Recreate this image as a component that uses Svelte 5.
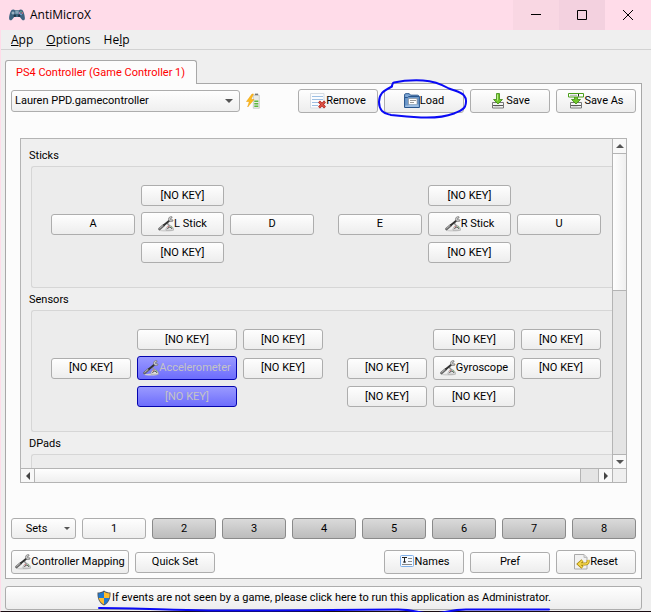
<script>
  const profiles = ['Lauren PPD.gamecontroller', '[NO PROFILE]'];
  let profile = $state(profiles[0]);
  let activeSet = $state(1);
  const sets = [1, 2, 3, 4, 5, 6, 7, 8];
  const none = '[NO KEY]';

  // Each pad is a 3x3 grid, read row by row; null leaves the cell empty.
  const groups = [
    {
      title: 'Sticks',
      pads: [
        { kind: 'stick', cells: [null, none, null, 'A', { name: 'L Stick' }, 'D', null, none, null] },
        { kind: 'stick', cells: [null, none, null, 'E', { name: 'R Stick' }, 'U', null, none, null] }
      ]
    },
    {
      title: 'Sensors',
      pads: [
        { kind: 'accel', active: true, cells: [null, none, none, none, { name: 'Accelerometer' }, none, null, none, null] },
        { kind: 'gyro', cells: [null, none, none, none, { name: 'Gyroscope' }, none, none, none, null] }
      ]
    },
    { title: 'DPads', pads: [] }
  ];
</script>

{#snippet tools()}
  <svg class="icon" viewBox="0 0 16 16" aria-hidden="true">
    <ellipse cx="8" cy="14.600" rx="7" ry="1" fill="#d0d0d0" />
    <path d="M8 14.200c-.5-6 7.500-6 7.500 0z" fill="#e4e4e4" stroke="#999" stroke-width=".6" />
    <path d="M9.500 13a2.300 2.300 0 0 1 4.500 0" fill="none" stroke="#555" />
    <path d="M9.500 11l1.400-.9" stroke="#d66" />
    <path d="M12.800 10.300l1.400 1.200" stroke="#6a6" />
    <path d="M9 7l3 3.500" stroke="#999" stroke-width="1.600" />
    <path d="M1.500 13L5.500 9.500" stroke="#666" stroke-width="2.600" stroke-linecap="round" />
    <path d="M1.500 12.500L5.300 9.200" stroke="#ccc" stroke-width=".8" />
    <path d="M5.500 9.500L11.500 4.500" stroke="#333" stroke-width="2" />
    <path d="M14 .8c-2-.6-3.800.8-3.400 2.800.3 1.700 2.200 2.600 4.400 1.400l-.3-1.200-1.900.1-.5-1.300 1.700-.7z" fill="#d0d0d0" stroke="#777" stroke-width=".8" />
  </svg>
{/snippet}

<div class="window">
  <header class="titlebar">
    <svg class="pad-logo" viewBox="0 0 16 12" aria-hidden="true">
      <path d="M3 .8Q5 0 6 1.300h4Q11 0 13 .8c1.500 1 2.700 5 2.900 8.200.1 2.600-1.900 3-3.100 1.400L10.800 8H5.200l-2 2.400C2 12 0 11.600.1 9 .3 5.800 1.500 1.800 3 .8z" fill="#3d6480" />
      <path d="M6.300 1.800h3.400v3H6.300z" fill="#87a5b8" />
      <path d="M2.500 4h3M4 2.500v3" stroke="#b8cad5" />
      <circle cx="5.800" cy="6.800" r="1.200" fill="#1d3445" />
      <circle cx="10.200" cy="6.800" r="1.200" fill="#1d3445" />
      <circle cx="12" cy="2.800" r=".8" fill="#62b58c" />
      <circle cx="13.300" cy="4.100" r=".8" fill="#e07575" />
      <circle cx="10.700" cy="4.100" r=".8" fill="#d78ec4" />
      <circle cx="12" cy="5.400" r=".8" fill="#76a8e0" />
    </svg>
    <span class="title">AntiMicroX</span>
    <button class="caption min" aria-label="Minimize"><svg viewBox="0 0 10 10"><path d="M0 4.500h10" /></svg></button>
    <button class="caption max" aria-label="Maximize"><svg viewBox="0 0 10 10"><path d="M.5.5h9v9h-9z" /></svg></button>
    <button class="caption" aria-label="Close"><svg viewBox="0 0 10 10"><path d="M0 0l10 10M10 0L0 10" /></svg></button>
  </header>

  <nav class="menubar">
    <button><u>A</u>pp</button>
    <button><u>O</u>ptions</button>
    <button>He<u>l</u>p</button>
  </nav>

  <main>
    <div class="tabs" role="tablist">
      <button class="tab" role="tab" aria-selected="true">PS4 Controller (Game Controller 1)</button>
    </div>

    <section class="pane">
      <div class="row profile">
        <div class="combo">
          <select bind:value={profile} aria-label="Profile">
            {#each profiles as p}<option>{p}</option>{/each}
          </select>
          <i class="arrow down"></i>
        </div>
        <svg class="battery" viewBox="0 0 16 16" role="img" aria-label="Charging">
          <path d="M9 .8h3v1.500h1.300v13H7.300v-13H9z" fill="#e8ebe8" stroke="#b4bab4" stroke-width=".6" />
          <path d="M9 .8h3v1.500H9z" fill="#777" />
          <path d="M8.300 7.500h4v1.500h-4zM8.300 10h4v1.500h-4zM8.300 12.500h4V14h-4z" fill="#5cb83c" />
          <path d="M6 1L.5 8.500h2.800L1.700 14 8 6.500H5L7.500 1z" fill="#fdbb1c" stroke="#e79a0c" stroke-width=".5" />
        </svg>
        <span class="grow"></span>
        <button class="btn std">
          <svg class="icon" viewBox="0 0 16 16" aria-hidden="true">
            <path d="M.5.5h13.500v14.500H.5z" fill="#fbfcfe" stroke="#d5dbe2" />
            <path d="M2 3.500h11M2 6.500h11M2 9.500h7M2 12.500h6" stroke="#9dbfe3" />
            <path d="M9 8.500l6 6M15 8.500l-6 6" stroke="#b3261c" stroke-width="2.600" />
            <path d="M9.400 8.900l5.200 5.200M14.600 8.900l-5.200 5.200" stroke="#e4584c" stroke-width="1.200" />
          </svg>Remove
        </button>
        <div class="circled">
          <button class="btn std">
            <svg class="icon" viewBox="0 0 16 16" aria-hidden="true">
              <path d="M.6 14V1.800Q.6.700 1.700.7h3.600l1.200 1.500h7.200q1 0 1 1v2" fill="#7fa8d6" stroke="#29558c" />
              <path d="M.6 14.500V4.500h3l1-1h10.800v11z" fill="#6d99cb" stroke="#29558c" />
              <path d="M4.500 5.500h8.500v6H4.500z" fill="#fff" stroke="#8a8a8a" stroke-width=".6" />
              <path d="M6 7.500h6M6 9.500h4" stroke="#999" />
              <path d="M1.200 12.500h3l1.300-1h9.200V14H1.200z" fill="#9dbfe4" />
            </svg>Load
          </button>
          <svg class="ink loop" viewBox="0 0 94 42" aria-hidden="true">
            <path d="M15 7.500C12 9 8 11 5 14c-4 5-4 13 0 18 3 3 6 3 9 4 9 1 20 2 30 2.500 12 .5 25-1 33-4 4-2 9-3 11-7 1.500-4 1.500-8-1-11-3-4-11-5-15-7C64 5 56 2 46 1.500 35 1 24 2 17 3.500c-2 .5-1 2-2.500 4" />
          </svg>
        </div>
        <button class="btn std">
          <svg class="icon" viewBox="0 0 16 16" aria-hidden="true">
            <path d="M2.500 9.500h11v5.500h-11z" fill="#f4f4f4" stroke="#777" />
            <path d="M3 12.500h10" stroke="#555" /><path d="M4.500 14h5" stroke="#bbb" />
            <path d="M6.500.5h3v6h3L8 11 3.500 6.500h3z" fill="#72c62c" stroke="#3d8a12" stroke-width=".8" />
            <path d="M7.500 1.500v6" stroke="#b9ee84" />
          </svg>Save
        </button>
        <button class="btn std">
          <svg class="icon" viewBox="0 0 16 16" aria-hidden="true">
            <path d="M2.500 9.500h11v5.500h-11z" fill="#f4f4f4" stroke="#777" />
            <path d="M3 12.500h10" stroke="#555" /><path d="M4.500 14h5" stroke="#bbb" />
            <path d="M6.500 3h3v3.500h3L8 11 3.500 6.500h3z" fill="#72c62c" stroke="#3d8a12" stroke-width=".8" />
            <path d="M.5.5h15v3.500H.5z" fill="#fff" stroke="#4ba01b" />
            <path d="M2 2.300h7" stroke="#aaa" /><path d="M10.500 1v2.500" stroke="#222" />
          </svg>Save As
        </button>
      </div>

      <div class="scrollarea">
        <div class="viewport">
          {#each groups as group}
            <h2>{group.title}</h2>
            <div class="group">
              {#each group.pads as pad}
                <div class="pad {pad.kind}">
                  {#each pad.cells as cell, i}
                    {#if cell === null}
                      <span></span>
                    {:else if typeof cell === 'string'}
                      <button class="btn key" class:active={pad.active && i === 7}>{cell}</button>
                    {:else}
                      <button class="btn" class:active={pad.active}>{@render tools()}{cell.name}</button>
                    {/if}
                  {/each}
                </div>
              {/each}
            </div>
          {/each}
        </div>
        <div class="bar vertical">
          <button class="step" aria-label="Scroll up"><i class="arrow up"></i></button>
          <div class="thumb"></div>
          <button class="step last" aria-label="Scroll down"><i class="arrow down"></i></button>
        </div>
        <div class="bar horizontal">
          <button class="step" aria-label="Scroll left"><i class="arrow left"></i></button>
          <div class="thumb"></div>
          <button class="step last" aria-label="Scroll right"><i class="arrow right"></i></button>
        </div>
        <div class="corner"></div>
      </div>

      <div class="row sets">
        <button class="btn key setmenu">Sets<i class="arrow down small"></i></button>
        {#each sets as n}
          <button class="btn key set" class:dim={n !== activeSet} onclick={() => (activeSet = n)}>{n}</button>
        {/each}
      </div>

      <div class="row">
        <button class="btn mapping">{@render tools()}Controller Mapping</button>
        <button class="btn key std">Quick Set</button>
        <span class="grow"></span>
        <button class="btn std">
          <svg class="icon" viewBox="0 0 16 16" aria-hidden="true">
            <rect x="1.500" y="1.500" width="13" height="11" rx="1" fill="#f4f9ff" stroke="#7fb0ea" />
            <path d="M3 3.500h5M5.500 3v5.500M4 8h3" stroke="#222" />
            <path d="M9 4.500h4M9 7.500h4M3 10.500h10" stroke="#888" />
          </svg>Names
        </button>
        <button class="btn key std">Pref</button>
        <button class="btn std">
          <svg class="icon" viewBox="0 0 16 16" aria-hidden="true">
            <path d="M.5.5h9.500L13 3.500V15H.5z" fill="#f1f1f1" stroke="#aaa" />
            <path d="M10 .5v3h3" fill="#ddd" stroke="#bbb" />
            <path d="M8.500 6.500L4.500 10l4 3.500M5 10h6c3 0 3.500-2 3-4" fill="none" stroke="#a8860c" stroke-width="3" />
            <path d="M8.500 6.500L4.500 10l4 3.500M5 10h6c3 0 3.500-2 3-4" fill="none" stroke="#f5d84c" stroke-width="1.500" />
          </svg>Reset
        </button>
      </div>
    </section>

    <div class="admin">
      <button class="btn">
        <svg class="icon" viewBox="0 0 16 16" aria-hidden="true">
          <path d="M8 .5c2 1.500 4 2 6.500 2 .3 6-1.500 10.500-6.500 13C3 13 1.200 8.500 1.500 2.500 4 2.500 6 2 8 .5z" fill="#505860" />
          <path d="M8 1.800V8H2.700C2.400 6.500 2.400 5 2.400 3.400 4.500 3.400 6.400 3 8 1.800z" fill="#1f78d0" />
          <path d="M8 1.800V8h5.300c.3-1.500.3-3 .3-4.600C11.500 3.400 9.600 3 8 1.800z" fill="#fdbc2c" />
          <path d="M8 8v6.500C5.200 13 3.400 10.700 2.700 8z" fill="#fdbc2c" />
          <path d="M8 8v6.500c2.800-1.500 4.600-3.800 5.300-6.500z" fill="#1f78d0" />
        </svg>If events are not seen by a game, please click here to run this application as Administrator.
      </button>
      <svg class="ink underline" viewBox="0 0 456 10" aria-hidden="true">
        <path d="M1 3C40 3 70 5 110 5.500 180 6 250 4.500 300 4.500c18 0 20 4 34 4 12 0 18-4 34-4h83" />
      </svg>
    </div>
  </main>
</div>

<style>
  :global(body) {
    margin: 0;
    background: #fff;
  }

  .window {
    border-left: 1px solid #ffdce9;
    border-bottom: 1px solid #1a0d12;
    background: #efefef;
    color: #000;
    font: 11px/16px Roboto, sans-serif;
  }

  button,
  select {
    font: inherit;
    color: inherit;
    margin: 0;
    padding: 0;
    border: 0;
    background: none;
    border-radius: 0;
    box-sizing: border-box;
  }

  .titlebar {
    display: flex;
    align-items: center;
    height: 30px;
    padding-left: 8px;
    background: #ffdce9;
    font: 12px/16px 'Open Sans', sans-serif;
  }
  .pad-logo {
    width: 16px;
    height: 12px;
    margin-right: 5px;
  }
  .title {
    flex: 1;
  }
  .caption {
    width: 46px;
    height: 30px;
    display: flex;
    align-items: center;
    justify-content: center;
  }
  .caption svg {
    width: 10px;
    height: 10px;
    fill: none;
    stroke: #000;
  }
  .min {
    background: #f9d7e3;
  }
  .max {
    background: #f3d1df;
  }

  .menubar {
    display: flex;
    gap: 13px;
    height: 19px;
    padding-left: 10px;
    border-bottom: 1px solid #d2d2d2;
    font: 12px/18px 'Open Sans', sans-serif;
  }

  main {
    padding: 10px 9px 1px 4px;
  }

  .tabs {
    display: flex;
  }
  .tab {
    position: relative;
    z-index: 1;
    height: 24px;
    margin-bottom: -1px;
    padding: 0 11px 0 10px;
    border: 1px solid #a8a8a8;
    border-bottom: 0;
    border-radius: 3px 3px 0 0;
    background: #fcfcfc;
    color: #f00;
  }

  .pane {
    padding: 5px 5px 4px;
    border: 1px solid #a8a8a8;
    background: #fcfcfc;
  }

  .row {
    display: flex;
    align-items: center;
    gap: 6px;
  }
  .grow {
    flex: 1;
  }

  .btn {
    display: flex;
    align-items: center;
    justify-content: center;
    height: 24px;
    border: 1px solid #adadad;
    border-radius: 3px;
    background: linear-gradient(#fefefe, #ededed);
    white-space: nowrap;
  }
  .key {
    height: 21px;
  }
  .std {
    width: 80px;
  }
  .icon {
    width: 16px;
    height: 16px;
    flex: none;
  }
  .active {
    border-color: #0404ae;
    background: linear-gradient(#9a9aff, #6d6dfc);
    color: #c4c4c4;
  }
  .dim {
    border-color: #8a8a8a;
    background: linear-gradient(#dadada, #bcbcbc);
  }

  .combo {
    position: relative;
    width: 229px;
  }
  .combo select {
    display: block;
    appearance: none;
    width: 100%;
    height: 22px;
    padding: 0 20px 0 3px;
    border: 1px solid #adadad;
    border-radius: 3px;
    background: linear-gradient(#fefefe, #efefef);
  }
  .combo .arrow {
    position: absolute;
    right: 7px;
    top: 9px;
    pointer-events: none;
  }
  .battery {
    width: 16px;
    height: 16px;
  }

  .arrow {
    width: 0;
    height: 0;
    border: 4px solid transparent;
  }
  .down {
    border-top-color: #555;
    border-bottom: 0;
  }
  .up {
    border-bottom-color: #555;
    border-top: 0;
  }
  .left {
    border-right-color: #444;
    border-left: 0;
  }
  .right {
    border-left-color: #444;
    border-right: 0;
  }
  .small {
    border-width: 3px;
    border-bottom: 0;
  }

  .ink {
    position: absolute;
    fill: none;
    stroke: #0a0af5;
    stroke-width: 2;
    stroke-linecap: round;
    pointer-events: none;
  }
  .circled {
    position: relative;
  }
  .loop {
    left: -7px;
    top: -10px;
    width: 94px;
    height: 42px;
  }

  .scrollarea {
    display: grid;
    grid-template-columns: minmax(0, 1fr) 14px;
    grid-template-rows: auto 14px;
    margin: 25px 9px 35px;
    border: 1px solid #b4b4b4;
    background: #efefef;
  }
  .viewport {
    height: 329px;
    box-sizing: border-box;
    padding: 9px 0 0 8px;
    overflow: hidden;
  }
  h2 {
    margin: 0;
    font: inherit;
  }
  .group {
    display: flex;
    gap: 24px;
    box-sizing: border-box;
    min-height: 122px;
    margin: 2px 0 4px 2px;
    padding: 18px 11px 24px 19px;
    border: 1px solid #d6d6d6;
    border-right: 0;
    border-radius: 3px 0 0 3px;
    background: #ececec;
  }
  .pad {
    display: grid;
    gap: 6px;
    align-items: center;
    align-content: start;
  }
  .stick {
    grid-template-columns: 84px 83px 84px;
  }
  .accel {
    grid-template-columns: 80px 100px 80px;
  }
  .gyro {
    grid-template-columns: 80px 82px 80px;
  }

  .bar {
    display: flex;
    background: #e4e4e4;
  }
  .vertical {
    flex-direction: column;
    border-left: 1px solid #b4b4b4;
  }
  .horizontal {
    border-top: 1px solid #b4b4b4;
  }
  .step {
    display: flex;
    flex: none;
    align-items: center;
    justify-content: center;
    width: 13px;
    height: 14px;
    background: #f8f8f8;
  }
  .horizontal .step {
    height: 13px;
  }
  .last {
    margin-top: auto;
    border-top: 1px solid #b4b4b4;
  }
  .horizontal .last {
    width: 14px;
    margin: 0;
    border-top: 0;
    border-left: 1px solid #b4b4b4;
  }
  .thumb {
    box-sizing: border-box;
    border: solid #b4b4b4;
  }
  .vertical .thumb {
    height: 42%;
    border-width: 1px 0;
    background: linear-gradient(90deg, #fefefe, #efefef);
  }
  .horizontal .thumb {
    flex: 1;
    margin-right: 17px;
    border-width: 0 1px;
    background: linear-gradient(#fefefe, #efefef);
  }
  .corner {
    border: solid #b4b4b4;
    border-width: 1px 0 0 1px;
  }

  .sets {
    margin-bottom: 11px;
  }
  .setmenu {
    width: 65px;
    gap: 17px;
    padding-left: 9px;
  }
  .set {
    flex: 1;
  }
  .mapping {
    width: 118px;
  }

  .admin {
    position: relative;
    margin-top: 7px;
  }
  .admin .btn {
    width: 100%;
  }
  .underline {
    left: 93px;
    bottom: -5px;
    width: 456px;
    height: 10px;
  }
</style>
